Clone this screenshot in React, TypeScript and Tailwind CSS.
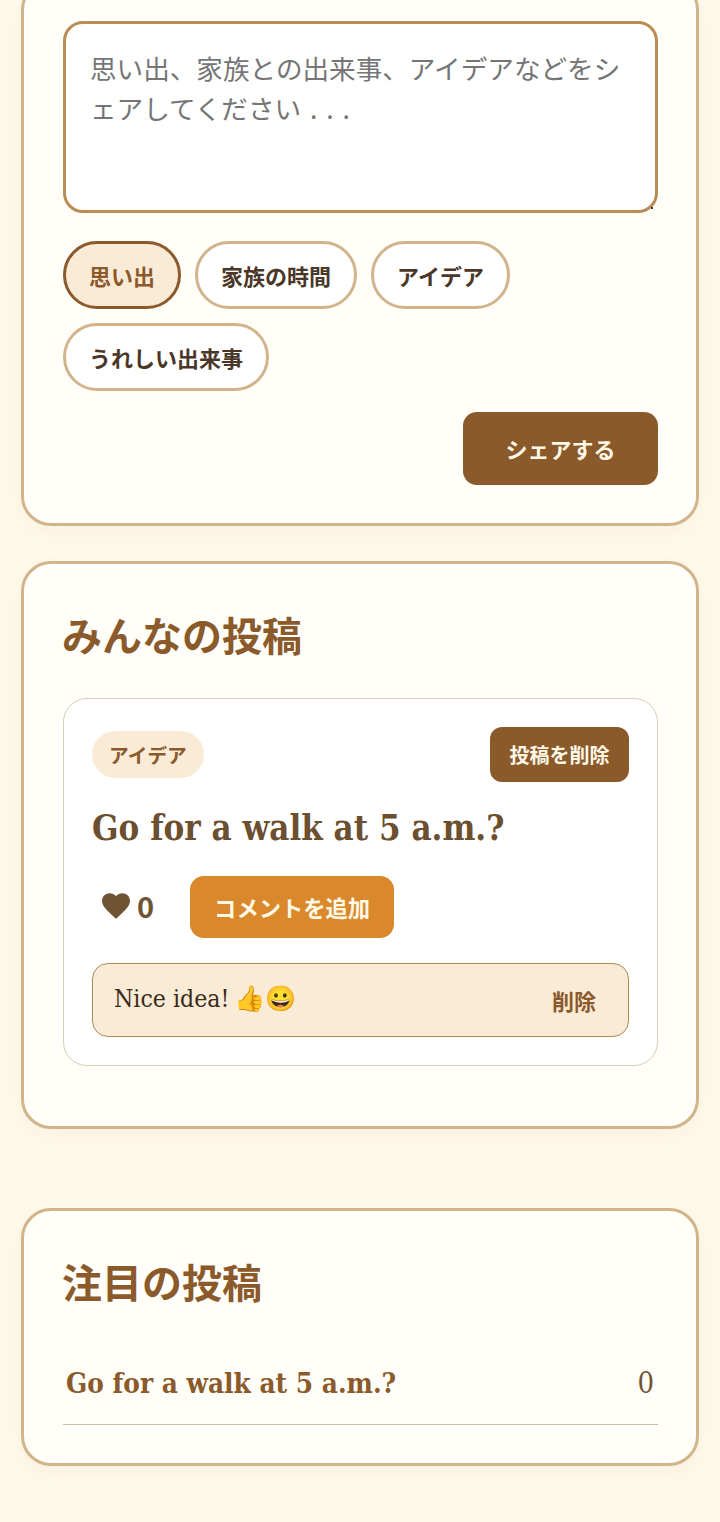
const sans = "font-['Noto_Sans_CJK_JP','Noto_Sans',sans-serif]";

function Tag({ label, active }: { label: string; active?: boolean }) {
  return (
    <button
      className={
        active
          ? "h-[68px] rounded-full border-[3px] border-[#8b5a2b] bg-[#faebd7] px-[23px] pt-[1px] text-[22px] font-semibold text-[#8b5a2b]"
          : "h-[68px] rounded-full border-[3px] border-[#d2b48c] bg-white px-[23px] pt-[1px] text-[22px] font-semibold text-[#4a3728]"
      }
    >
      {label}
    </button>
  );
}

export default function App() {
  return (
    <div className={`h-[1522px] overflow-hidden bg-[#fff9ea] ${sans}`}>
      <section className="mx-[21px] -mt-[20px] h-[546px] rounded-[30px] border-[3px] border-[#d2b48c] bg-[#fffef9] pt-[38px] pr-[38px] pl-[39px] shadow-[0_6px_18px_rgba(139,90,43,0.05)]">
        <div className="relative">
          <textarea
            readOnly
            placeholder="思い出、家族との出来事、アイデアなどをシェアしてください&#8196;.&#8196;.&#8196;."
            className="block h-[192px] w-[595px] resize-none rounded-[20px] border-[3px] border-[#b98d55] bg-white py-[24px] pr-[25px] pl-[24px] text-[26.6px] leading-[40px] text-[#757575] placeholder:text-[#757575]"
          />
          <span className="absolute right-[5px] bottom-[4px] h-[2px] w-[2px] bg-[#3a3a3a]" />
        </div>
        <div className="mt-[28px] flex flex-wrap gap-[14px]">
          <Tag label="思い出" active />
          <Tag label="家族の時間" />
          <Tag label="アイデア" />
          <Tag label="うれしい出来事" />
        </div>
        <div className="mt-[21px] flex justify-end">
          <button className="h-[73px] w-[195px] rounded-[14px] bg-[#8b5a2b] text-[22px] font-bold text-[#fff8e7]">
            シェアする
          </button>
        </div>
      </section>

      <section className="mx-[21px] mt-[35px] h-[568px] rounded-[30px] border-[3px] border-[#d2b48c] bg-[#fffef9] pt-[42px] pr-[38px] pl-[39px] shadow-[0_6px_18px_rgba(139,90,43,0.05)]">
        <h2 className="-ml-[1px] text-[40px] leading-[56px] font-bold text-[#8b5a2b]">みんなの投稿</h2>
        <article className="mt-[36px] h-[368px] rounded-[24px] border border-[#d8cfb8] bg-white px-[28px] pt-[28px]">
          <div className="flex items-center justify-between">
            <span className="rounded-full bg-[#faebd7] px-[17px] py-[8px] text-[19.7px] leading-[31px] font-semibold text-[#8b5a2b]">
              アイデア
            </span>
            <button className="h-[55px] w-[139px] rounded-[12px] bg-[#8b5a2b] text-[20px] font-bold text-[#fff8e7]">
              投稿を削除
            </button>
          </div>
          <h3 className="mt-[19px] font-['DejaVu_Serif_Condensed',serif] text-[34.6px] leading-[54px] font-bold text-[#6b4f2f]">
            Go for a walk at 5 a.m.?
          </h3>
          <div className="mt-[21px] flex items-center">
            <span className="-mt-[3px] ml-[10px] flex items-center gap-[7px] text-[#6f5433]">
              <svg viewBox="2 3 20 18.35" className="h-[26px] w-[28px]" fill="currentColor">
                <path d="M12 21.35l-1.45-1.32C5.4 15.36 2 12.28 2 8.5 2 5.42 4.42 3 7.5 3c1.74 0 3.41.81 4.5 2.09C13.09 3.81 14.76 3 16.5 3 19.58 3 22 5.42 22 8.5c0 3.78-3.4 6.86-8.55 11.54L12 21.35z" />
              </svg>
              <span className="text-[29px] leading-none font-bold">0</span>
            </span>
            <button className="ml-[36px] h-[62px] w-[204px] rounded-[14px] bg-[#d9882b] pt-[2px] text-[22.3px] font-bold text-[#fff8e7]">
              コメントを追加
            </button>
          </div>
          <div className="mt-[25px] flex h-[74px] items-center justify-between rounded-[16px] border border-[#a98a50] bg-[#faebd7] pr-[32px] pl-[21px]">
            <span className="-mt-[3px] font-['DejaVu_Serif_Condensed',serif] text-[24.6px] text-[#3a2a1a]">
              Nice idea! <span className="-ml-[2px] text-[25px]">👍😀</span>
            </span>
            <span className="text-[22px] font-semibold text-[#8b5a2b]">削除</span>
          </div>
        </article>
      </section>

      <section className="mx-[21px] mt-[79px] h-[258px] rounded-[30px] border-[3px] border-[#d2b48c] bg-[#fffef9] pt-[42px] pr-[38px] pl-[39px] shadow-[0_6px_18px_rgba(139,90,43,0.05)]">
        <h2 className="-ml-[1px] text-[40px] leading-[56px] font-bold text-[#8b5a2b]">注目の投稿</h2>
        <div className="mt-[38px] flex h-[78px] items-center justify-between border-b border-[#c9bfa8] px-[3px] pb-[4px] font-['DejaVu_Serif_Condensed',serif]">
          <span className="text-[27.7px] font-bold text-[#8b5a2b]">Go for a walk at 5 a.m.?</span>
          <span className="mr-[1px] text-[29px] text-[#6f5433]">0</span>
        </div>
      </section>
    </div>
  );
}
